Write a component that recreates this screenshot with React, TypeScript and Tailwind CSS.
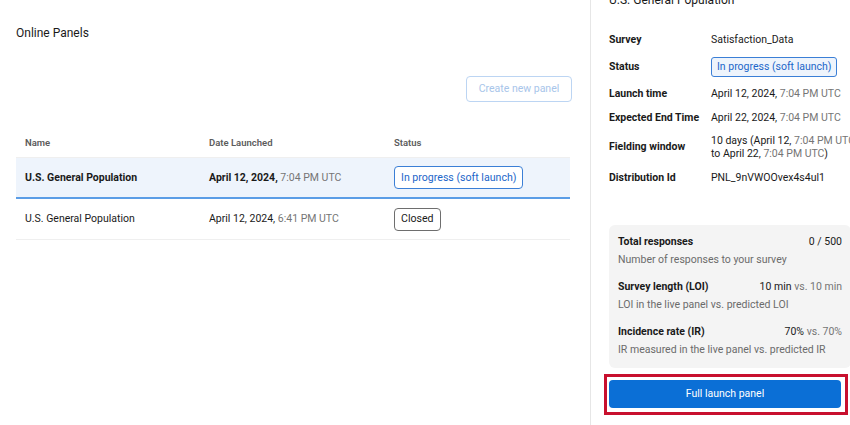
import React from 'react';

const font = { fontFamily: 'Roboto, "Liberation Sans", sans-serif' };

interface Panel {
  name: string;
  date: string;
  time: string;
  status: string;
  active: boolean;
}

const panels: Panel[] = [
  { name: 'U.S. General Population', date: 'April 12, 2024,', time: '7:04 PM UTC', status: 'In progress (soft launch)', active: true },
  { name: 'U.S. General Population', date: 'April 12, 2024,', time: '6:41 PM UTC', status: 'Closed', active: false },
];

const DetailRow = ({ label, h, children }: { label: string; h: string; children: React.ReactNode }) => (
  <div className={`flex items-center ${h}`}>
    <div className="w-[102px] shrink-0 text-[10.5px] font-bold text-[#1a1a1a]">{label}</div>
    <div className="text-[10.5px] text-[#1a1a1a] whitespace-nowrap">{children}</div>
  </div>
);

const Metric = ({ title, value, note }: { title: string; value: React.ReactNode; note: string }) => (
  <div className="flex flex-col">
    <div className="flex h-[18px] items-center justify-between text-[10.5px] text-[#1a1a1a]">
      <span className="font-bold">{title}</span>
      <span>{value}</span>
    </div>
    <div className="h-[18px] leading-[18px] text-[10.5px] text-[#6b6b6b] whitespace-nowrap">{note}</div>
  </div>
);

export default function App() {
  return (
    <div className="w-[850px] h-[425px] overflow-hidden flex bg-white" style={font}>
      {/* Left: panel list */}
      <div className="w-[591px] shrink-0 border-r border-[#e6e6e6] pl-4 pr-5">
        <h1 className="pt-[23px] leading-[20px] text-[12px] text-[#1a1a1a]">Online Panels</h1>
        <div className="flex justify-end mt-[33px]">
          <button className="h-[26px] w-[106px] -mr-[2px] rounded-[4px] border border-[#bcd5f3] text-[10.5px] text-[#a8c5ea] bg-white">
            Create new panel
          </button>
        </div>
        <div className="mt-[27px]">
          <div className="flex h-[29px] items-center border-b border-[#efefef] text-[9.5px] font-semibold text-[#5c5c5c]">
            <div className="w-[193px] pl-[9px]">Name</div>
            <div className="w-[185px]">Date Launched</div>
            <div>Status</div>
          </div>
          {panels.map((p, i) => (
            <div
              key={i}
              className={`flex h-[41px] items-center text-[10.5px] text-[#1a1a1a] ${
                p.active ? 'bg-[#eef4fc] border-b-2 border-[#5b9de6] font-bold' : 'border-b border-[#efefef]'
              }`}
            >
              <div className="w-[193px] pl-[9px]">{p.name}</div>
              <div className="w-[185px]">
                {p.date} <span className="font-normal text-[#757575]">{p.time}</span>
              </div>
              <div>
                <span
                  className={`inline-flex h-[23px] items-center rounded-[4px] border px-[6px] text-[10.6px] font-normal bg-white ${
                    p.active ? 'border-[#3b7fd6] text-[#1c66c9]' : 'border-[#6e6e6e] text-[#1a1a1a]'
                  }`}
                >
                  {p.status}
                </span>
              </div>
            </div>
          ))}
        </div>
      </div>

      {/* Right: panel details */}
      <div className="w-[268px] shrink-0 pl-[18px] pr-[8px]">
        <h2 className="-mt-[10px] h-[20px] leading-[20px] text-[12px] text-[#1a1a1a]">U.S. General Population</h2>
        <div className="mt-[16px] flex flex-col">
          <DetailRow label="Survey" h="h-[27px]">Satisfaction_Data</DetailRow>
          <DetailRow label="Status" h="h-[27px]">
            <span className="inline-flex h-[20px] items-center rounded-[3px] border border-[#3b7fd6] bg-[#eef4fc] px-[5px] text-[#1c66c9]">
              In progress (soft launch)
            </span>
          </DetailRow>
          <DetailRow label="Launch time" h="h-[27px]">
            April 12, 2024, <span className="text-[#757575]">7:04 PM UTC</span>
          </DetailRow>
          <DetailRow label="Expected End Time" h="h-[22px]">
            April 22, 2024, <span className="text-[#757575]">7:04 PM UTC</span>
          </DetailRow>
          <DetailRow label="Fielding window" h="h-[36px]">
            <div className="leading-[13px]">
              10 days (April 12, <span className="text-[#757575]">7:04 PM UTC</span>
              <br />
              to April 22, <span className="text-[#757575]">7:04 PM UTC</span>)
            </div>
          </DetailRow>
          <DetailRow label="Distribution Id" h="h-[26px]">PNL_9nVWOOvex4s4ul1</DetailRow>
        </div>

        <div className="mt-[34px] rounded-[6px] bg-[#f4f4f4] px-[9px] pt-[8px] pb-[9px] flex flex-col gap-[9px]">
          <Metric title="Total responses" value="0 / 500" note="Number of responses to your survey" />
          <Metric
            title="Survey length (LOI)"
            value={<>10 min <span className="text-[#757575]">vs. 10 min</span></>}
            note="LOI in the live panel vs. predicted LOI"
          />
          <Metric
            title="Incidence rate (IR)"
            value={<>70% <span className="text-[#757575]">vs. 70%</span></>}
            note="IR measured in the live panel vs. predicted IR"
          />
        </div>

        <div className="mt-[6px] -ml-[5px] w-[244px] border-[3px] border-[#c8102e] pl-[2px] pr-[4px] pt-[3px] pb-[4px]">
          <button className="block h-[28px] w-full rounded-[4px] bg-[#0b6fd6] text-[10.5px] text-white">
            Full launch panel
          </button>
        </div>
      </div>
    </div>
  );
}
